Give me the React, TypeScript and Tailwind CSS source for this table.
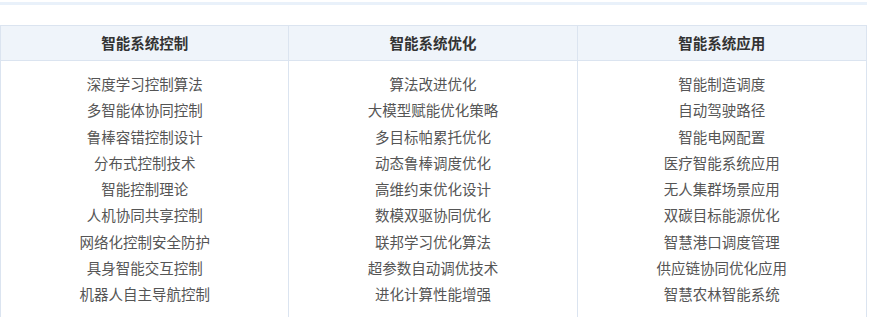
const columns = [
  {
    title: "智能系统控制",
    items: [
      "深度学习控制算法",
      "多智能体协同控制",
      "鲁棒容错控制设计",
      "分布式控制技术",
      "智能控制理论",
      "人机协同共享控制",
      "网络化控制安全防护",
      "具身智能交互控制",
      "机器人自主导航控制",
    ],
  },
  {
    title: "智能系统优化",
    items: [
      "算法改进优化",
      "大模型赋能优化策略",
      "多目标帕累托优化",
      "动态鲁棒调度优化",
      "高维约束优化设计",
      "数模双驱协同优化",
      "联邦学习优化算法",
      "超参数自动调优技术",
      "进化计算性能增强",
    ],
  },
  {
    title: "智能系统应用",
    items: [
      "智能制造调度",
      "自动驾驶路径",
      "智能电网配置",
      "医疗智能系统应用",
      "无人集群场景应用",
      "双碳目标能源优化",
      "智慧港口调度管理",
      "供应链协同优化应用",
      "智慧农林智能系统",
    ],
  },
];

export default function App() {
  return (
    <div className="w-[870px] h-[317px] bg-white font-['Noto_Sans_CJK_SC',sans-serif] overflow-hidden">
      <div className="mt-[2px] h-[3px] w-[867px] bg-[#e9f1fa]" />
      <div className="mt-[20px] w-[867px] border border-[#dbe4f0]">
        <div className="grid grid-cols-3 bg-[#eff4fa] border-b border-[#dbe4f0]">
          {columns.map((c, i) => (
            <div
              key={c.title}
              className={`h-[34px] flex items-center justify-center text-[14.5px] font-bold text-[#333] ${i < 2 ? "border-r border-[#dbe4f0]" : ""}`}
            >
              {c.title}
            </div>
          ))}
        </div>
        <div className="grid grid-cols-3">
          {columns.map((c, i) => (
            <div
              key={c.title}
              className={`py-[10px] flex flex-col items-center text-[14.5px] text-[#555] ${i < 2 ? "border-r border-[#dbe4f0]" : ""}`}
            >
              {c.items.map((t) => (
                <div key={t} className="h-[26.3px] leading-[26px]">
                  {t}
                </div>
              ))}
            </div>
          ))}
        </div>
      </div>
    </div>
  );
}
